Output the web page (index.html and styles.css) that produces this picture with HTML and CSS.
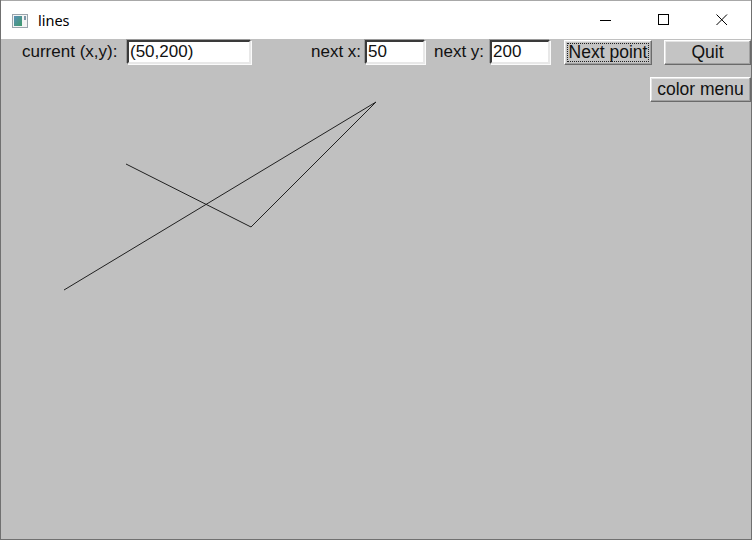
FILE: index.html
```html
<!DOCTYPE html>
<html>
<head>
<meta charset="utf-8">
<link rel="stylesheet" href="styles.css">
</head>
<body>
<div class="window">
  <div class="titlebar">
    <svg class="appicon" width="16" height="14" viewBox="0 0 16 14">
      <defs>
        <linearGradient id="g" x1="0" y1="0" x2="1" y2="1">
          <stop offset="0" stop-color="#5a8fb8"/>
          <stop offset="1" stop-color="#3e9a6a"/>
        </linearGradient>
      </defs>
      <rect x="0.5" y="0.5" width="15" height="13" fill="#f4f4f4" stroke="#9aa4ac"/>
      <rect x="2" y="2" width="8" height="10" fill="url(#g)"/>
      <rect x="12" y="2" width="2" height="4" fill="#7d97a8"/>
    </svg>
    <span class="title">lines</span>
    <div class="caption">
      <div class="cbtn"><svg width="12" height="12" viewBox="0 0 12 12"><line x1="0" y1="6.5" x2="11" y2="6.5" stroke="#000" stroke-width="1"/></svg></div>
      <div class="cbtn"><svg width="12" height="12" viewBox="0 0 12 12"><rect x="0.5" y="0.5" width="10" height="10" fill="none" stroke="#000" stroke-width="1"/></svg></div>
      <div class="cbtn"><svg width="12" height="12" viewBox="0 0 12 12"><path d="M0.5 0.5 L11 11 M11 0.5 L0.5 11" stroke="#000" stroke-width="1"/></svg></div>
    </div>
  </div>
  <div class="content">
    <svg class="canvas" width="750" height="500" viewBox="0 0 750 500">
      <polyline points="63,251 375,63 250,188 125,125" fill="none" stroke="#202020" stroke-width="1"/>
    </svg>
    <div class="row1">
      <span class="lbl lbl-cur">current (x,y):</span>
      <span class="entry e-cur">(50,200)</span>
      <span class="lbl lbl-nx">next x:</span>
      <span class="entry e-nx">50</span>
      <span class="lbl lbl-ny">next y:</span>
      <span class="entry e-ny">200</span>
      <span class="btn b-next"><span class="focus">Next point</span></span>
      <span class="btn b-quit">Quit</span>
    </div>
    <div class="row2">
      <span class="btn b-color">color menu</span>
    </div>
  </div>
</div>
</body>
</html>
```
FILE: styles.css
```css
html, body {
  margin: 0;
  padding: 0;
}
body {
  width: 752px;
  height: 540px;
  overflow: hidden;
  font-family: "Liberation Sans", Arial, sans-serif;
}
.window {
  box-sizing: border-box;
  width: 752px;
  height: 540px;
  border: 1px solid #707070;
  border-top: none;
  display: flex;
  flex-direction: column;
  background: #c0c0c0;
}
.titlebar {
  height: 38px;
  flex: none;
  background: #fff;
  display: flex;
  align-items: center;
  border-top: 1px solid #a8a8a8;
}
.appicon {
  margin-left: 11px;
  margin-right: 10px;
  margin-top: 1px;
}
.title {
  font-family: "Noto Sans", "Open Sans", sans-serif;
  font-size: 14.5px;
  color: #000;
  margin-top: -1px;
}
.caption {
  margin-left: auto;
  display: flex;
  height: 100%;
}
.cbtn {
  width: 58px;
  display: flex;
  align-items: center;
  justify-content: center;
}
.content {
  position: relative;
  flex: 1;
  background: #c0c0c0;
}
.canvas {
  position: absolute;
  left: 0;
  top: 0;
}
.row1 {
  position: relative;
  display: flex;
  align-items: center;
  height: 26px;
  padding-left: 21px;
  font-size: 17px;
  color: #111;
}
.lbl {
  white-space: nowrap;
  flex: none;
}
.entry {
  box-sizing: border-box;
  flex: none;
  height: 24px;
  background: #fff;
  border-top: 2px solid #3a3a3a;
  border-left: 2px solid #3a3a3a;
  border-bottom: 2px solid #e8e8e8;
  border-right: 2px solid #e8e8e8;
  box-shadow: -1px -1px 0 #9a9a9a, 1px 1px 0 #fafafa;
  padding-left: 1px;
  line-height: 20px;
  color: #111;
}
.lbl-cur { width: 105px; }
.e-cur { width: 124px; }
.lbl-nx { width: 54px; margin-left: 60px; }
.e-nx { width: 60px; }
.lbl-ny { width: 56px; margin-left: 9px; }
.e-ny { width: 60px; }
.btn {
  box-sizing: border-box;
  flex: none;
  display: flex;
  align-items: center;
  justify-content: center;
  height: 25px;
  background: #c4c4c4;
  border-top: 1px solid #ffffff;
  border-left: 1px solid #ffffff;
  border-right: 1px solid #6a6a6a;
  border-bottom: 1px solid #6a6a6a;
  box-shadow: inset -1px -1px 0 #a0a0a0, inset 1px 1px 0 #e4e4e4;
  font-size: 17.5px;
  color: #111;
}
.b-next { width: 88px; margin-left: 14px; }
.b-next .focus {
  box-sizing: border-box;
  width: 82px;
  height: 19px;
  border: 1px dotted #222;
  display: flex;
  align-items: center;
  justify-content: center;
}
.b-quit { width: 87px; margin-left: 12px; }
.row2 {
  position: relative;
  display: flex;
  justify-content: flex-end;
  margin-top: 12px;
}
.b-color { width: 101px; height: 25px; }
```
